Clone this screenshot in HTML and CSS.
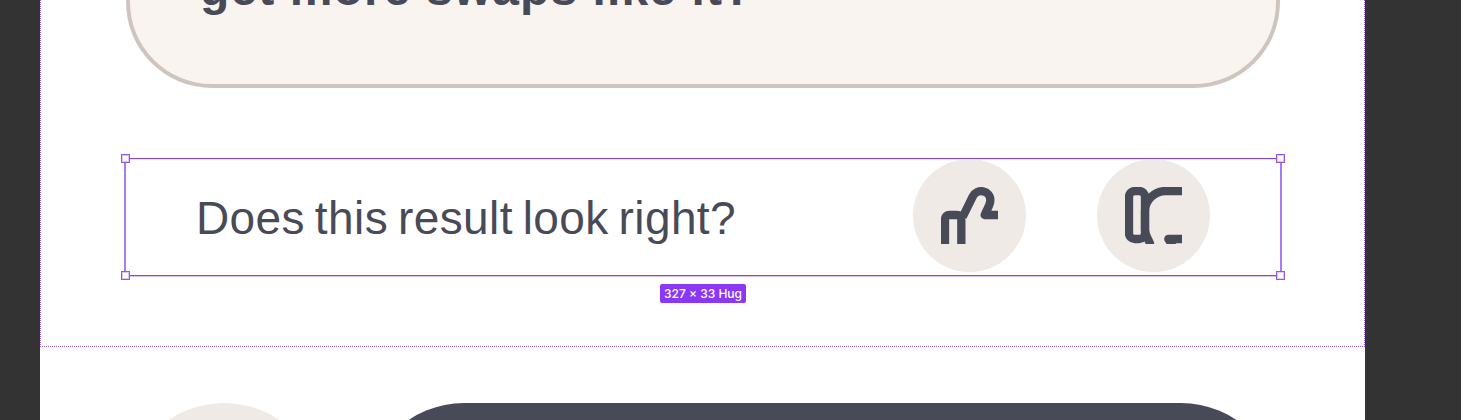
FILE: index.html
```
<!DOCTYPE html>
<html lang="en">
  <head>
    <meta charset="UTF-8" />
    <meta name="viewport" content="width=device-width, initial-scale=1.0" />
    <title>Swap feedback</title>
    <link rel="stylesheet" href="styles.css">
  </head>
  <body>
    <main class="frame">
      <section class="content">
        <div class="card">
          <p class="card-text">get more swaps like it?</p>
        </div>
        <div class="feedback">
          <p class="question">Does this result look right?</p>
          <div class="votes">
            <button class="vote" aria-label="Yes">
              <svg viewBox="0 0 171 171">
                <path d="M12 172V98Q12 84 26 84H47Q61 84 61 98V172" />
                <path d="M65 90L95 29C108 3 148 9 148 40C148 55 139 64 131 84H172" />
              </svg>
            </button>
            <button class="vote" aria-label="No">
              <svg viewBox="0 0 171 171">
                <rect x="12" y="12" width="48" height="144" rx="17" />
                <path d="M172 12H122C88 12 60 40 60 72V128C60 144 68 152 77 174" />
                <path d="M172 156H130L143 176" />
              </svg>
            </button>
          </div>
          <i class="handle top-left"></i>
          <i class="handle top-right"></i>
          <i class="handle bottom-left"></i>
          <i class="handle bottom-right"></i>
          <span class="size">327 × 33 Hug</span>
        </div>
      </section>
      <footer class="actions">
        <div class="round"></div>
        <div class="primary"></div>
      </footer>
    </main>
  </body>
</html>
```

FILE: styles.css
```
* {
  box-sizing: border-box;
}
body {
  margin: 0;
  height: 420px;
  overflow: hidden;
  background: #333333;
  font-family: "Liberation Sans", Arial, sans-serif;
  color: #484a58;
}
p {
  margin: 0;
  white-space: nowrap;
}
.frame {
  width: 1325px;
  height: 420px;
  margin-left: 40px;
  background: white;
  overflow: hidden;
}
.content {
  height: 347px;
  padding: 0 84px 0 85px;
  border: 1px dotted #9a5fe0;
  border-top: none;
}
.card {
  display: flex;
  height: 88px;
  border: 4px solid #cfc5be;
  border-top: none;
  border-radius: 0 0 86px 86px;
  background: #faf4f1;
}
.card-text {
  margin: -36px 0 0 70px;
  font-size: 48px;
  line-height: 50px;
  font-weight: bold;
  letter-spacing: 1.1px;
}
.feedback {
  position: relative;
  display: flex;
  justify-content: space-between;
  height: 118px;
  margin: 70px -2px 0 -2px;
  padding: 0 70px 0 70px;
  border: 1px solid #8548c9;
  border-left: 2px solid #ac7af0;
  border-right: 2px solid #ac7af0;
  box-shadow: inset 0 1px #eee0fb, 0 1px #d9c0f5;
}
.question {
  font-size: 46px;
  line-height: 118px;
  letter-spacing: 0.4px;
  word-spacing: -3.3px;
}
.votes {
  display: flex;
  gap: 71px;
}
.vote {
  width: 113px;
  height: 113px;
  padding: 28px;
  border: none;
  border-radius: 50%;
  background: #efeae5;
}
.vote svg {
  display: block;
  width: 57px;
  height: 57px;
  fill: none;
  stroke: #484a58;
  stroke-width: 25;
  stroke-linejoin: round;
}
.handle {
  position: absolute;
  width: 9px;
  height: 9px;
  border: 1px solid #9558dc;
  background: white;
  box-shadow: inset 0 0 0 1px #dcc6f7;
}
.top-left {
  top: -5px;
  left: -5px;
}
.top-right {
  top: -5px;
  right: -5px;
}
.bottom-left {
  bottom: -5px;
  left: -5px;
}
.bottom-right {
  bottom: -5px;
  right: -5px;
}
.size {
  position: absolute;
  top: 125px;
  left: 534px;
  width: 86px;
  height: 19px;
  border-radius: 2px;
  background: #8a38f5;
  color: white;
  font-family: Inter, sans-serif;
  font-size: 12px;
  font-weight: 500;
  line-height: 19px;
  text-align: center;
  white-space: nowrap;
}
.actions {
  display: flex;
  justify-content: space-between;
  margin: 56px 85px 0 85px;
}
.round {
  width: 198px;
  height: 198px;
  border-radius: 50%;
  background: #efeae5;
}
.primary {
  width: 915px;
  height: 198px;
  border-radius: 99px;
  background: #484a58;
}
```
